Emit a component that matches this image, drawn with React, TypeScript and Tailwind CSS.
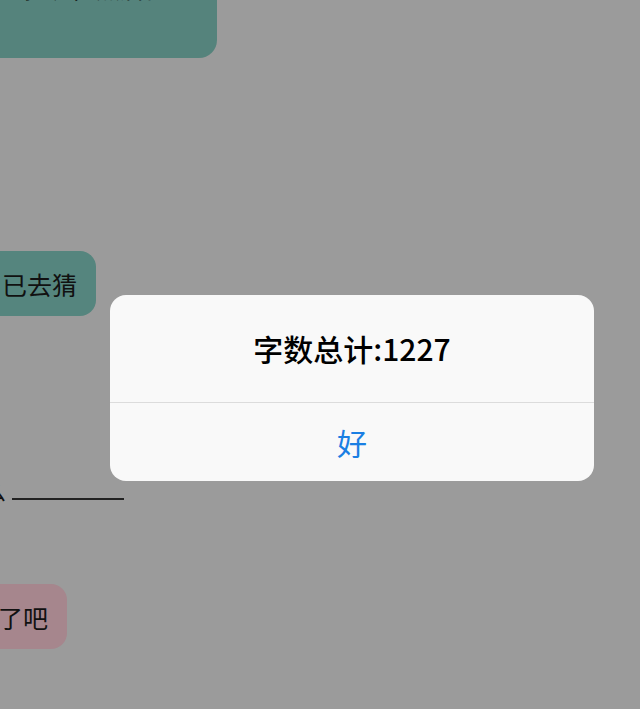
const font = "font-['Noto_Sans_CJK_SC','Noto_Sans',sans-serif]";

function Bubble({
  text,
  color,
  width,
  className = "",
}: {
  text: string;
  color: string;
  width: string;
  className?: string;
}) {
  return (
    <div
      className={`flex h-[65px] items-center justify-end overflow-hidden whitespace-nowrap rounded-r-[16px] pr-[19px] text-[25px] leading-[32px] text-[#111] ${color} ${width} ${className}`}
    >
      {text}
    </div>
  );
}

function AlertDialog() {
  return (
    <div className="absolute inset-0 flex items-start justify-start pl-[110px] pt-[295px]">
      <div className={`w-[484px] overflow-hidden rounded-[16px] bg-[#f9f9f9] ${font}`}>
        <div className="flex h-[108px] items-center justify-center border-b border-[#dcdcdc] text-[30px] font-medium text-black">
          字数总计:1227
        </div>
        <div className="flex h-[78px] items-center justify-center text-[30px] text-[#1a7fe3]">好</div>
      </div>
    </div>
  );
}

export default function App() {
  return (
    <div className={`relative h-[709px] w-[640px] overflow-hidden bg-[#9b9b9b] ${font}`}>
      <div className="flex flex-col items-start">
        <div className="h-[58px] w-[217px] overflow-hidden rounded-br-[18px] bg-[#55837c]">
          <div className="mt-[-28px] whitespace-nowrap text-[24px] leading-[32px] text-[#111]">
            心把握，然后在
          </div>
        </div>

        <Bubble text="已去猜" color="bg-[#55857e]" width="w-[96px]" className="mt-[193px]" />

        <div className="mt-[166px] flex h-[20px] items-end">
          <span className="ml-[-18px] text-[24px] leading-[24px] text-[#111]">么</span>
          <div className="mb-[2px] ml-[6px] h-[2px] w-[112px] bg-[#222]" />
        </div>

        <Bubble text="对了吧" color="bg-[#a6868d]" width="w-[67px]" className="mt-[82px]" />
      </div>

      <AlertDialog />
    </div>
  );
}
